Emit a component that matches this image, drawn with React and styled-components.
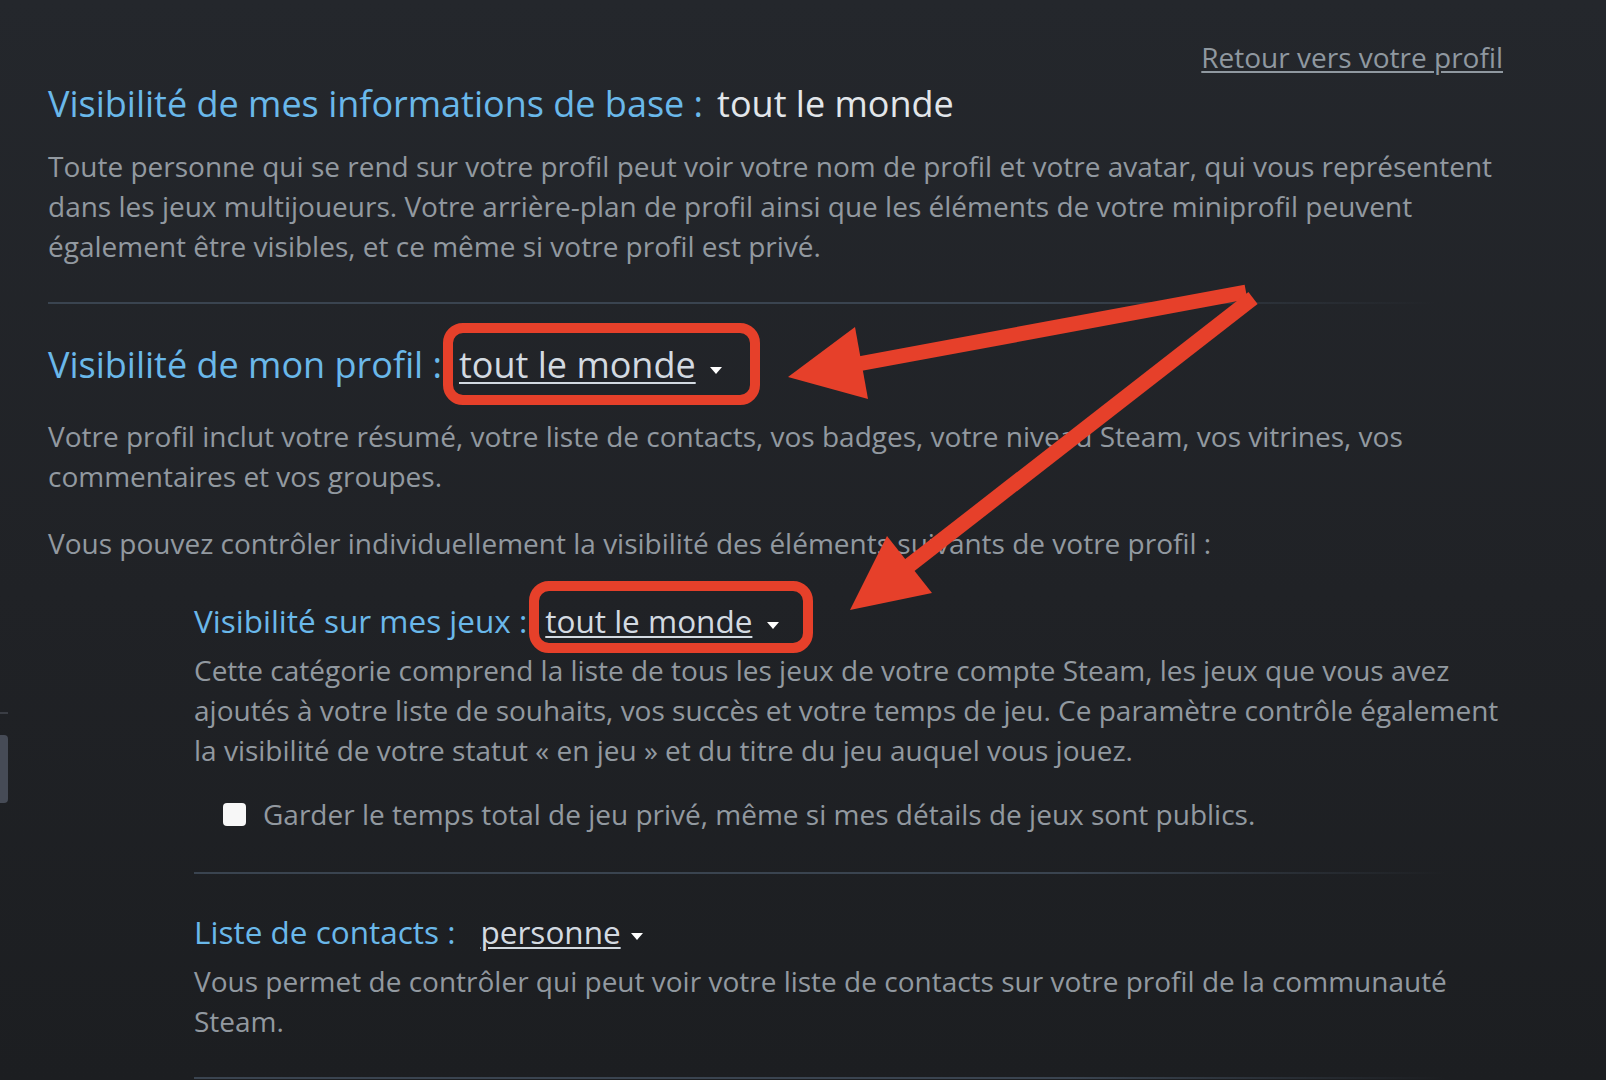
import React from "react";
import styled, { createGlobalStyle } from "styled-components";

const GlobalStyle = createGlobalStyle`
  html, body { margin: 0; padding: 0; }
  body {
    background: #1f2125;
    font-family: "Open Sans", "Noto Sans", "Liberation Sans", sans-serif;
    -webkit-font-smoothing: antialiased;
  }
`;

const Page = styled.div`
  position: relative;
  width: 1606px;
  height: 1080px;
  overflow: hidden;
  display: flex;
  background: linear-gradient(180deg, #24272c 0%, #202226 55%, #1c1e21 100%);
`;

const LeftRail = styled.div`
  flex: none;
  width: 8px;
  padding-top: 712px;
  display: flex;
  flex-direction: column;
  gap: 21px;
`;

const RailLine = styled.div`
  height: 2px;
  background: #3a3d44;
`;

const RailThumb = styled.div`
  height: 68px;
  background: #464b56;
  border-radius: 0 4px 4px 0;
`;

const Content = styled.div`
  flex: none;
  width: 1468px;
  margin-left: 40px;
  padding-top: 37px;
  display: flex;
  flex-direction: column;
`;

const TopBar = styled.div`
  display: flex;
  justify-content: flex-end;
  padding-right: 13px;
  height: 40px;
  font-size: 28px;
  line-height: 40px;
`;

const BackLink = styled.a`
  color: #8f98a0;
  text-decoration: underline;
  text-decoration-thickness: 2px;
  text-underline-offset: 3px;
  cursor: pointer;
`;

const TitleRow = styled.div`
  display: flex;
  align-items: baseline;
  gap: ${(p) => p.$gap}px;
  margin-top: ${(p) => p.$mt}px;
  font-size: ${(p) => (p.$sub ? 31.5 : 36)}px;
  line-height: ${(p) => (p.$sub ? 40 : 44)}px;
  color: #6ab8ea;
  white-space: nowrap;
`;

const StaticValue = styled.span`
  color: #e2e6ea;
`;

const Dropdown = styled.span`
  position: relative;
  display: inline-block;
  color: #d3dae1;
  cursor: pointer;
`;

const DropText = styled.span`
  text-decoration: underline;
  text-decoration-thickness: 2px;
  text-underline-offset: ${(p) => (p.$sub ? 3 : 4)}px;
`;

const Caret = styled.span`
  display: inline-block;
  width: 0;
  height: 0;
  margin-left: ${(p) => p.$gap}px;
  margin-bottom: 4px;
  border-left: 6px solid transparent;
  border-right: 6px solid transparent;
  border-top: 7px solid #ffffff;
`;

const Highlight = styled.span`
  position: absolute;
  inset: ${(p) => p.$inset};
  border: 10px solid #e6402a;
  border-radius: 20px;
  pointer-events: none;
`;

const Body = styled.p`
  margin: ${(p) => p.$mt}px 0 0;
  font-size: 28px;
  line-height: 40px;
  color: #9299a0;
  white-space: nowrap;
`;

const Divider = styled.div`
  height: 2px;
  margin-top: ${(p) => p.$mt}px;
  margin-right: ${(p) => p.$mr}px;
  background: linear-gradient(90deg, #3a4450 0%, #3a4450 70%, rgba(58, 68, 80, 0) 100%);
`;

const SubSection = styled.div`
  margin-left: 146px;
  display: flex;
  flex-direction: column;
`;

const CheckRow = styled.label`
  display: flex;
  align-items: center;
  gap: 17px;
  margin-top: 24px;
  margin-left: 29px;
  height: 40px;
  font-size: 28px;
  line-height: 40px;
  color: #9299a0;
`;

const CheckBox = styled.span`
  flex: none;
  width: 23px;
  height: 23px;
  border-radius: 4px;
  background: #f7f7f7;
`;

const Overlay = styled.svg`
  position: absolute;
  left: 0;
  top: 0;
  width: 1606px;
  height: 1080px;
  pointer-events: none;
`;

function Select({ children, sub, caretGap, inset }) {
  return (
    <Dropdown>
      <DropText $sub={sub}>{children}</DropText>
      <Caret $gap={caretGap} />
      {inset && <Highlight $inset={inset} />}
    </Dropdown>
  );
}

export default function App() {
  const red = "#e6402a";
  return (
    <>
      <GlobalStyle />
      <Page>
        <LeftRail>
          <RailLine />
          <RailThumb />
        </LeftRail>
        <Content>
          <TopBar>
            <BackLink>Retour vers votre profil</BackLink>
          </TopBar>

          <TitleRow $mt={5} $gap={14}>
            <span>Visibilité de mes informations de base :</span>
            <StaticValue>tout le monde</StaticValue>
          </TitleRow>
          <Body $mt={20}>
            Toute personne qui se rend sur votre profil peut voir votre nom de profil et votre avatar, qui vous représentent
            <br />
            dans les jeux multijoueurs. Votre arrière-plan de profil ainsi que les éléments de votre miniprofil peuvent
            <br />
            également être visibles, et ce même si votre profil est privé.
          </Body>

          <Divider $mt={36} $mr={80} />

          <TitleRow $mt={39} $gap={17}>
            <span>Visibilité de mon profil :</span>
            <Select caretGap={14} inset="-20px -38px -18px -16px">tout le monde</Select>
          </TitleRow>
          <Body $mt={29}>
            Votre profil inclut votre résumé, votre liste de contacts, vos badges, votre niveau Steam, vos vitrines, vos
            <br />
            commentaires et vos groupes.
          </Body>
          <Body $mt={27}>
            Vous pouvez contrôler individuellement la visibilité des éléments suivants de votre profil :
          </Body>

          <SubSection>
            <TitleRow $sub $mt={38} $gap={18}>
              <span>Visibilité sur mes jeux :</span>
              <Select sub caretGap={15} inset="-20px -34px -12px -16px">tout le monde</Select>
            </TitleRow>
            <Body $mt={9}>
              Cette catégorie comprend la liste de tous les jeux de votre compte Steam, les jeux que vous avez
              <br />
              ajoutés à votre liste de souhaits, vos succès et votre temps de jeu. Ce paramètre contrôle également
              <br />
              la visibilité de votre statut « en jeu » et du titre du jeu auquel vous jouez.
            </Body>
            <CheckRow>
              <CheckBox />
              <span>Garder le temps total de jeu privé, même si mes détails de jeux sont publics.</span>
            </CheckRow>

            <Divider $mt={38} $mr={70} />

            <TitleRow $sub $mt={38} $gap={25}>
              <span>Liste de contacts :</span>
              <Select sub caretGap={10}>personne</Select>
            </TitleRow>
            <Body $mt={9}>
              Vous permet de contrôler qui peut voir votre liste de contacts sur votre profil de la communauté
              <br />
              Steam.
            </Body>

            <Divider $mt={36} $mr={70} />
          </SubSection>
        </Content>

        <Overlay viewBox="0 0 1606 1080">
          <line x1="1246" y1="292" x2="858" y2="364" stroke={red} strokeWidth="15" />
          <polygon points="788,377 855,327 868,399" fill={red} />
          <line x1="1253" y1="298" x2="906" y2="568" stroke={red} strokeWidth="15" />
          <polygon points="850,610 887,536 932,593" fill={red} />
        </Overlay>
      </Page>
    </>
  );
}
